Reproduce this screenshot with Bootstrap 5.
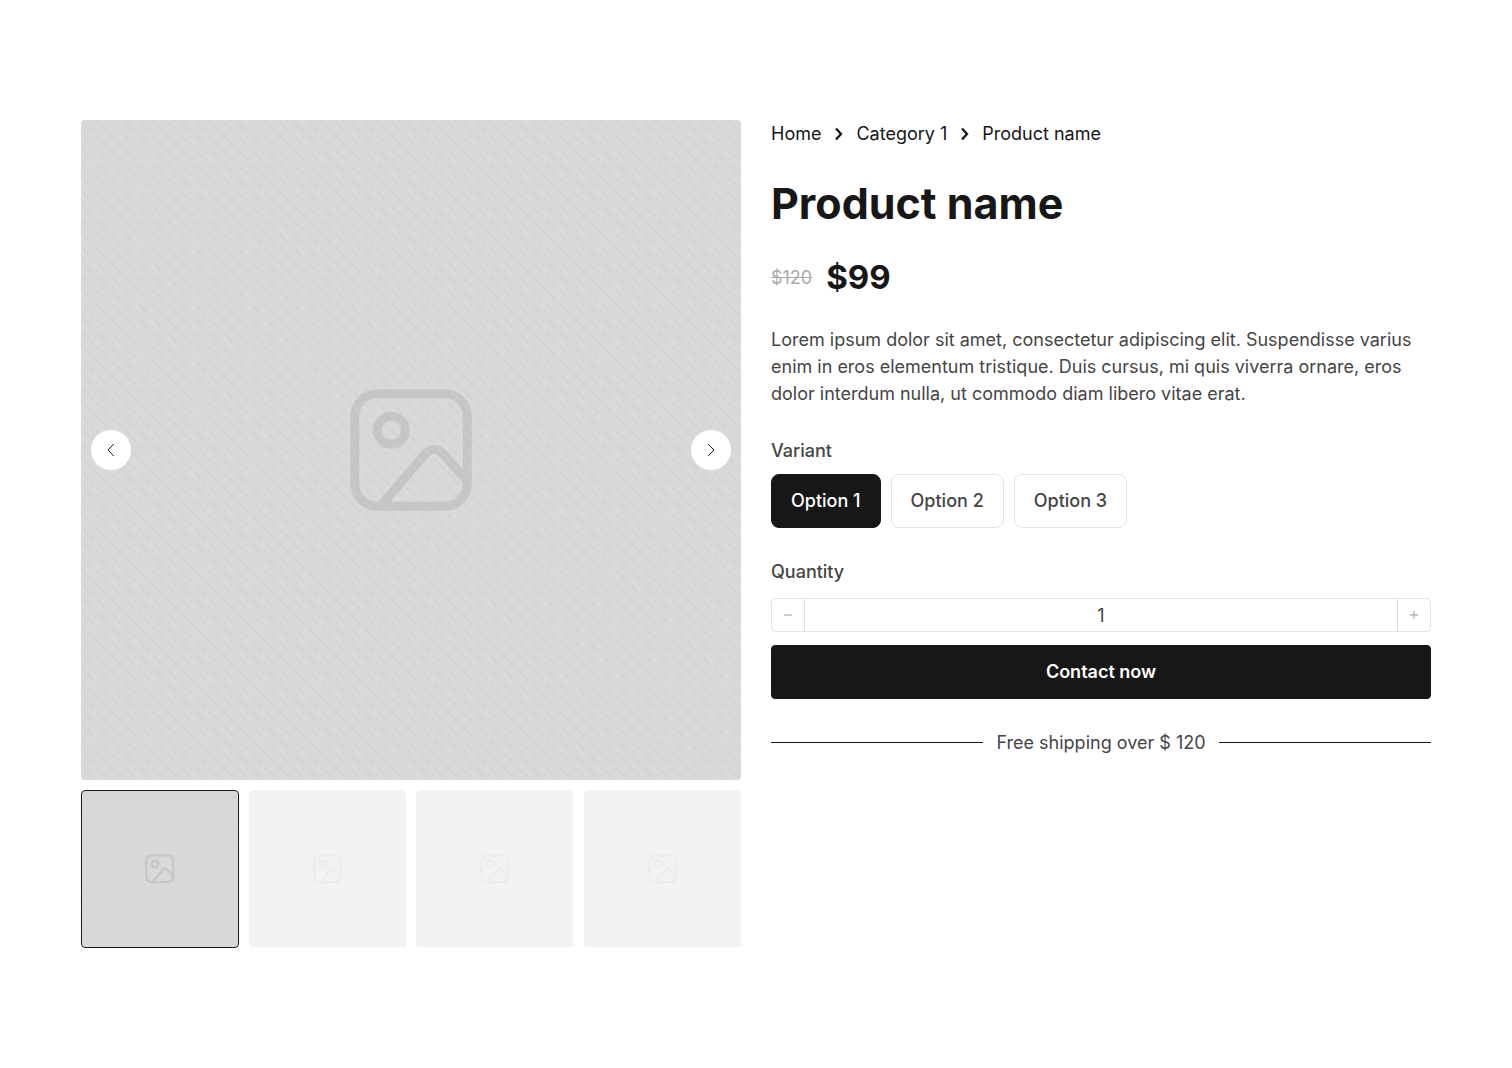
<!DOCTYPE html>
<html lang="en">
<head>
<meta charset="utf-8">
<meta name="viewport" content="width=device-width, initial-scale=1">
<title>Product name</title>
<link href="https://cdn.jsdelivr.net/npm/bootstrap@5.3.0/dist/css/bootstrap.min.css" rel="stylesheet">
<style>
  :root { --ink: #171717; --body: #454545; --line: #e5e5e5; }
  body { font-family: Inter, sans-serif; font-size: 18px; line-height: 27px; color: var(--body); background: #fff; }
  .product { max-width: 1374px; padding: 120px 12px; }
  .product-cols { --bs-gutter-x: 30px; }
  .shot { display: block; width: 100%; height: auto; border-radius: 4px; }
  .arrows { padding: 0 10px; }
  .arrow { width: 40px; height: 40px; background: #fff; color: var(--ink); border: 0; }
  .thumbs { gap: 10px; margin-top: 10px; }
  .thumb { flex: 1 1 0; padding: 0; border: 0; border-radius: 4px; background: none; overflow: hidden; position: relative; }
  .thumb .shot { opacity: .33; }
  .thumb.active .shot { opacity: 1; }
  .thumb.active::after { content: ""; position: absolute; inset: 0; border: 1px solid var(--ink); border-radius: 4px; }
  .crumbs { gap: 13px; color: var(--ink); margin-bottom: 30px; }
  .crumbs a { color: inherit; text-decoration: none; }
  .title { font-size: 43px; line-height: 52px; font-weight: 700; color: var(--ink); margin-bottom: 24px; }
  .price { gap: 14px; height: 48px; margin-bottom: 25px; }
  .price-old { color: #a9a9a9; }
  .price-now { font-size: 33px; font-weight: 700; color: var(--ink); }
  .variants { margin: 30px 0; }
  .field-title { font-size: 18px; line-height: 27px; font-weight: 500; margin-bottom: 10px; color: var(--body); }
  .options { gap: 10px; }
  .btn-option { --bs-btn-padding-x: 19px; --bs-btn-padding-y: 12px; --bs-btn-font-size: 18px; --bs-btn-font-weight: 500;
    --bs-btn-line-height: 28px; --bs-btn-border-radius: 8px; --bs-btn-color: var(--body); --bs-btn-border-color: var(--line);
    --bs-btn-active-bg: var(--ink); --bs-btn-active-color: #fff; --bs-btn-active-border-color: var(--ink); }
  .qty { height: 34px; border: 1px solid var(--line); border-radius: 4px; margin: 13px 0; }
  .qty button { width: 33px; border: 0; background: none; padding: 0; color: #b5b5b5; }
  .qty button:first-child { border-right: 1px solid #dcdcdc; }
  .qty button:last-child { border-left: 1px solid #dcdcdc; }
  .qty input { min-width: 0; border: 0; padding: 0; background: none; color: var(--body); text-align: center; }
  .btn-contact { --bs-btn-bg: var(--ink); --bs-btn-color: #fff; --bs-btn-border-color: var(--ink); --bs-btn-hover-bg: #333; --bs-btn-hover-color: #fff;
    --bs-btn-font-size: 18px; --bs-btn-font-weight: 600; --bs-btn-line-height: 28px; --bs-btn-padding-y: 12px; --bs-btn-border-radius: 4px; }
  .shipping { gap: 13px; margin-top: 30px; }
  .rule { height: 1px; background: var(--ink); }
</style>
</head>
<body>
<svg width="0" height="0" class="position-absolute" aria-hidden="true">
  <defs>
    <pattern id="hatch" width="14.04" height="14.04" patternUnits="userSpaceOnUse">
      <path d="M1.5 1.5 12.5 12.5" stroke="#cdcdcd" stroke-width="1"/>
    </pattern>
    <symbol id="placeholder" viewBox="0 0 660 660">
      <path fill="#d9d9d9" d="M0 0h660v660H0z"/>
      <g fill="none" stroke="#c5c5c5" stroke-width="9">
        <rect x="273.75" y="273.75" width="112.5" height="112.5" rx="22.5"/>
        <circle cx="310.3" cy="310.3" r="14"/>
        <path d="M299.5 386 343 335.500Q352.500 323.500 362.500 334.500L386 360.500"/>
      </g>
      <path fill="url(#hatch)" d="M0 0h660v660H0z"/>
    </symbol>
  </defs>
</svg>

<main class="product container-fluid">
  <div class="row product-cols">
    <section class="col-md-6" aria-label="Gallery">
      <div class="position-relative">
        <svg class="shot" viewBox="0 0 660 660"><use href="#placeholder"/></svg>
        <div class="arrows position-absolute top-50 start-0 w-100 translate-middle-y d-flex justify-content-between">
          <button type="button" class="arrow rounded-circle d-flex align-items-center justify-content-center" aria-label="Previous">
            <svg width="16" height="16" viewBox="0 0 16 16" fill="none" stroke="currentColor"><path d="M10.800 2 5 8l5.800 6"/></svg>
          </button>
          <button type="button" class="arrow rounded-circle d-flex align-items-center justify-content-center" aria-label="Next">
            <svg width="16" height="16" viewBox="0 0 16 16" fill="none" stroke="currentColor"><path d="M5.200 2 11 8l-5.800 6"/></svg>
          </button>
        </div>
      </div>
      <div class="thumbs d-flex">
        <button type="button" class="thumb active" aria-label="Image 1"><svg class="shot" viewBox="0 0 660 660"><use href="#placeholder"/></svg></button>
        <button type="button" class="thumb" aria-label="Image 2"><svg class="shot" viewBox="0 0 660 660"><use href="#placeholder"/></svg></button>
        <button type="button" class="thumb" aria-label="Image 3"><svg class="shot" viewBox="0 0 660 660"><use href="#placeholder"/></svg></button>
        <button type="button" class="thumb" aria-label="Image 4"><svg class="shot" viewBox="0 0 660 660"><use href="#placeholder"/></svg></button>
      </div>
    </section>

    <section class="col-md-6">
      <nav class="crumbs d-flex flex-wrap align-items-center" aria-label="Breadcrumb">
        <a href="#">Home</a>
        <svg width="9" height="14" viewBox="0 0 9 14" fill="none" stroke="currentColor" stroke-width="2.300"><path d="M2 1.500l5 5.500-5 5.500"/></svg>
        <a href="#">Category 1</a>
        <svg width="9" height="14" viewBox="0 0 9 14" fill="none" stroke="currentColor" stroke-width="2.300"><path d="M2 1.500l5 5.500-5 5.500"/></svg>
        <a href="#" aria-current="page">Product name</a>
      </nav>
      <h1 class="title">Product name</h1>
      <div class="price d-flex align-items-center">
        <s class="price-old">$120</s>
        <span class="price-now">$99</span>
      </div>
      <p class="mb-0">Lorem ipsum dolor sit amet, consectetur adipiscing elit. Suspendisse varius enim in eros elementum tristique. Duis cursus, mi quis viverra ornare, eros dolor interdum nulla, ut commodo diam libero vitae erat.</p>

      <form>
        <fieldset class="variants">
          <legend class="field-title">Variant</legend>
          <div class="options d-flex flex-wrap">
            <input type="radio" class="btn-check" name="variant" id="opt1" checked><label class="btn btn-option" for="opt1">Option 1</label>
            <input type="radio" class="btn-check" name="variant" id="opt2"><label class="btn btn-option" for="opt2">Option 2</label>
            <input type="radio" class="btn-check" name="variant" id="opt3"><label class="btn btn-option" for="opt3">Option 3</label>
          </div>
        </fieldset>
        <label class="field-title d-block mb-0" for="qty">Quantity</label>
        <div class="qty d-flex">
          <button type="button" class="d-flex align-items-center justify-content-center" aria-label="Decrease"><svg width="8" height="8" viewBox="0 0 8 8" stroke="currentColor" stroke-width="1.300"><path d="M0 4h8"/></svg></button>
          <input class="flex-grow-1" type="text" inputmode="numeric" id="qty" value="1">
          <button type="button" class="d-flex align-items-center justify-content-center" aria-label="Increase"><svg width="8" height="8" viewBox="0 0 8 8" stroke="currentColor" stroke-width="1.300"><path d="M0 4h8M4 0v8"/></svg></button>
        </div>
        <button type="button" class="btn btn-contact w-100">Contact now</button>
      </form>
      <div class="shipping d-flex align-items-center">
        <span class="rule flex-grow-1"></span><span>Free shipping over $ 120</span><span class="rule flex-grow-1"></span>
      </div>
    </section>
  </div>
</main>
<script src="https://cdn.jsdelivr.net/npm/bootstrap@5.3.0/dist/js/bootstrap.bundle.min.js"></script>
</body>
</html>
